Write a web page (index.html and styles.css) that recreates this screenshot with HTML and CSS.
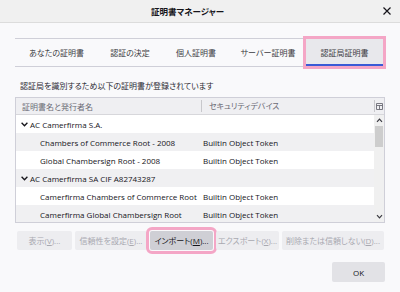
FILE: index.html
```html
<!DOCTYPE html>
<html lang="ja">
<head>
<meta charset="utf-8">
<title>証明書マネージャー</title>
<link rel="stylesheet" href="styles.css">
</head>
<body>
<div class="titlebar">
  <span class="title">証明書マネージャー</span>
  <svg class="close" width="8" height="8" viewBox="0 0 8 8"><path d="M0.5 0.5L7.5 7.5M7.5 0.5L0.5 7.5" stroke="#15141a" stroke-width="1.2"/></svg>
</div>
<div class="main">
  <div class="tabs">
    <div class="tab t1">あなたの証明書</div>
    <div class="tab t2">認証の決定</div>
    <div class="tab t3">個人証明書</div>
    <div class="tab t4">サーバー証明書</div>
    <div class="tab t5 selected">認証局証明書</div>
  </div>
  <p class="desc">認証局を識別するため以下の証明書が登録されています</p>
  <div class="tree">
    <div class="thead">
      <div class="col c1">証明書名と発行者名</div>
      <div class="col c2">セキュリティデバイス</div>
      <div class="picker">
        <svg width="7" height="7" viewBox="0 0 7 7"><path d="M0.5 0.5H6.5V6.5H0.5Z M0.5 2.5H6.5 M3.5 2.5V6.5" fill="none" stroke="#6b6b75" stroke-width="0.9"/></svg>
      </div>
    </div>
    <div class="tbody">
      <div class="rows">
        <div class="row parent"><span class="name"><svg class="chev" width="7" height="5" viewBox="0 0 7 5"><path d="M0.6 0.8L3.5 3.8L6.4 0.8" fill="none" stroke="#15141a" stroke-width="1.3"/></svg>AC Camerfirma S.A.</span><span class="dev"></span></div>
        <div class="row child"><span class="name">Chambers of Commerce Root - 2008</span><span class="dev">Builtin Object Token</span></div>
        <div class="row child"><span class="name">Global Chambersign Root - 2008</span><span class="dev">Builtin Object Token</span></div>
        <div class="row parent"><span class="name"><svg class="chev" width="7" height="5" viewBox="0 0 7 5"><path d="M0.6 0.8L3.5 3.8L6.4 0.8" fill="none" stroke="#15141a" stroke-width="1.3"/></svg>AC Camerfirma SA CIF A82743287</span><span class="dev"></span></div>
        <div class="row child"><span class="name">Camerfirma Chambers of Commerce Root</span><span class="dev">Builtin Object Token</span></div>
        <div class="row child"><span class="name">Camerfirma Global Chambersign Root</span><span class="dev">Builtin Object Token</span></div>
      </div>
      <div class="scrollbar">
        <div class="arrow"><svg width="7" height="5" viewBox="0 0 7 5"><path d="M1 3.8L3.5 1.2L6 3.8" fill="none" stroke="#3b3b42" stroke-width="1.2"/></svg></div>
        <div class="thumb"></div>
        <div class="track"></div>
        <div class="arrow"><svg width="7" height="5" viewBox="0 0 7 5"><path d="M1 1.2L3.5 3.8L6 1.2" fill="none" stroke="#3b3b42" stroke-width="1.2"/></svg></div>
      </div>
    </div>
  </div>
  <div class="actions">
    <button class="btn b1">表示(<u>V</u>)...</button>
    <button class="btn b2">信頼性を設定(<u>E</u>)...</button>
    <button class="btn b3 active">インポート(<u>M</u>)...</button>
    <button class="btn b4">エクスポート(<u>X</u>)...</button>
    <button class="btn b5">削除または信頼しない(<u>D</u>)...</button>
  </div>
  <div class="footer">
    <button class="ok">OK</button>
  </div>
</div>
</body>
</html>
```

FILE: styles.css
```css
* { box-sizing: border-box; }
html, body { margin: 0; padding: 0; }
body {
  width: 400px;
  height: 292px;
  overflow: hidden;
  background: #f9f9fb;
  font-family: "Open Sans", "Noto Sans CJK JP", sans-serif;
  font-size: 8px;
  color: #15141a;
  font-feature-settings: "palt";
}
.titlebar {
  height: 23px;
  background: #f0f0f0;
  border-bottom: 1px solid #dcdcdc;
  display: flex;
  align-items: center;
}
.title {
  flex: 1;
  text-align: center;
  font-weight: bold;
  font-size: 8.5px;
  margin-left: -8px;
}
.close { margin-right: 9px; }
.main { padding: 0 15px; }
.tabs {
  margin-top: 15px;
  height: 29px;
  display: flex;
  border-top: 1px solid #cfcfd8;
  border-bottom: 1px solid #cfcfd8;
}
.tab {
  display: flex;
  align-items: center;
  justify-content: center;
  white-space: nowrap;
  color: #3b3b42;
}
.t1 { width: 83px; }
.t2 { width: 64px; }
.t3 { width: 68px; }
.t4 { width: 76px; }
.t5 { width: 77px; }
.tab.selected {
  background: #e8e8ec;
  border-bottom: 2px solid #3a5bd6;
  padding-top: 2px;
  outline: 3px solid #f4a6c6;
  outline-offset: 0;
}
.desc {
  margin: 13px 0 5px 5px;
  line-height: 12px;
  color: #2b2a33;
}
.tree {
  border: 1px solid #cfcfd8;
  background: #fff;
}
.thead {
  display: flex;
  align-items: center;
  height: 17px;
  background: #efeff2;
  border-bottom: 1px solid #d7d7db;
  color: #6b6b75;
}
.c1 { width: 185px; padding-left: 6px; }
.c2 {
  flex: 1;
  border-left: 1px solid #c8c8cc;
  padding-left: 7px;
  line-height: 12px;
}
.picker {
  width: 10px;
  height: 12px;
  border-left: 1px solid #c8c8cc;
  display: flex;
  align-items: center;
  justify-content: center;
}
.tbody {
  display: flex;
  height: 107px;
  overflow: hidden;
}
.rows { flex: 1; }
.row {
  display: flex;
  align-items: center;
  height: 18px;
}
.row:nth-child(even) { background: #f0f0f2; }
.name {
  width: 187px;
  display: flex;
  align-items: center;
  white-space: nowrap;
  overflow: hidden;
}
.parent .name { padding-left: 5px; }
.child .name { padding-left: 24px; }
.chev { margin-right: 2px; }
.dev { white-space: nowrap; }
.scrollbar {
  width: 10px;
  background: #f0f0f0;
  display: flex;
  flex-direction: column;
}
.arrow {
  height: 11px;
  display: flex;
  align-items: center;
  justify-content: center;
}
.thumb {
  height: 21px;
  margin: 0 1px;
  background: #cdcdcd;
}
.track { flex: 1; }
.actions {
  display: flex;
  gap: 3px;
  margin-top: 8px;
  padding-left: 2px;
}
.btn, .ok {
  font: inherit;
  border: none;
  border-radius: 2px;
  padding: 0;
  font-feature-settings: "palt";
}
.btn {
  height: 19px;
  background: #ededf0;
  color: #a9a9b0;
  white-space: nowrap;
  text-align: center;
}
.b1 { width: 55px; }
.b2 { width: 72px; }
.b3 { width: 63px; }
.b4 { width: 63px; }
.b5 { width: 102px; }
.btn.active {
  background: #cfcfd5;
  color: #15141a;
  outline: 3px solid #f4a6c6;
  outline-offset: 1px;
}
.footer {
  display: flex;
  justify-content: flex-end;
  margin-top: 12px;
}
.ok {
  width: 53px;
  height: 20px;
  background: #e2e2e6;
  color: #15141a;
}
```
